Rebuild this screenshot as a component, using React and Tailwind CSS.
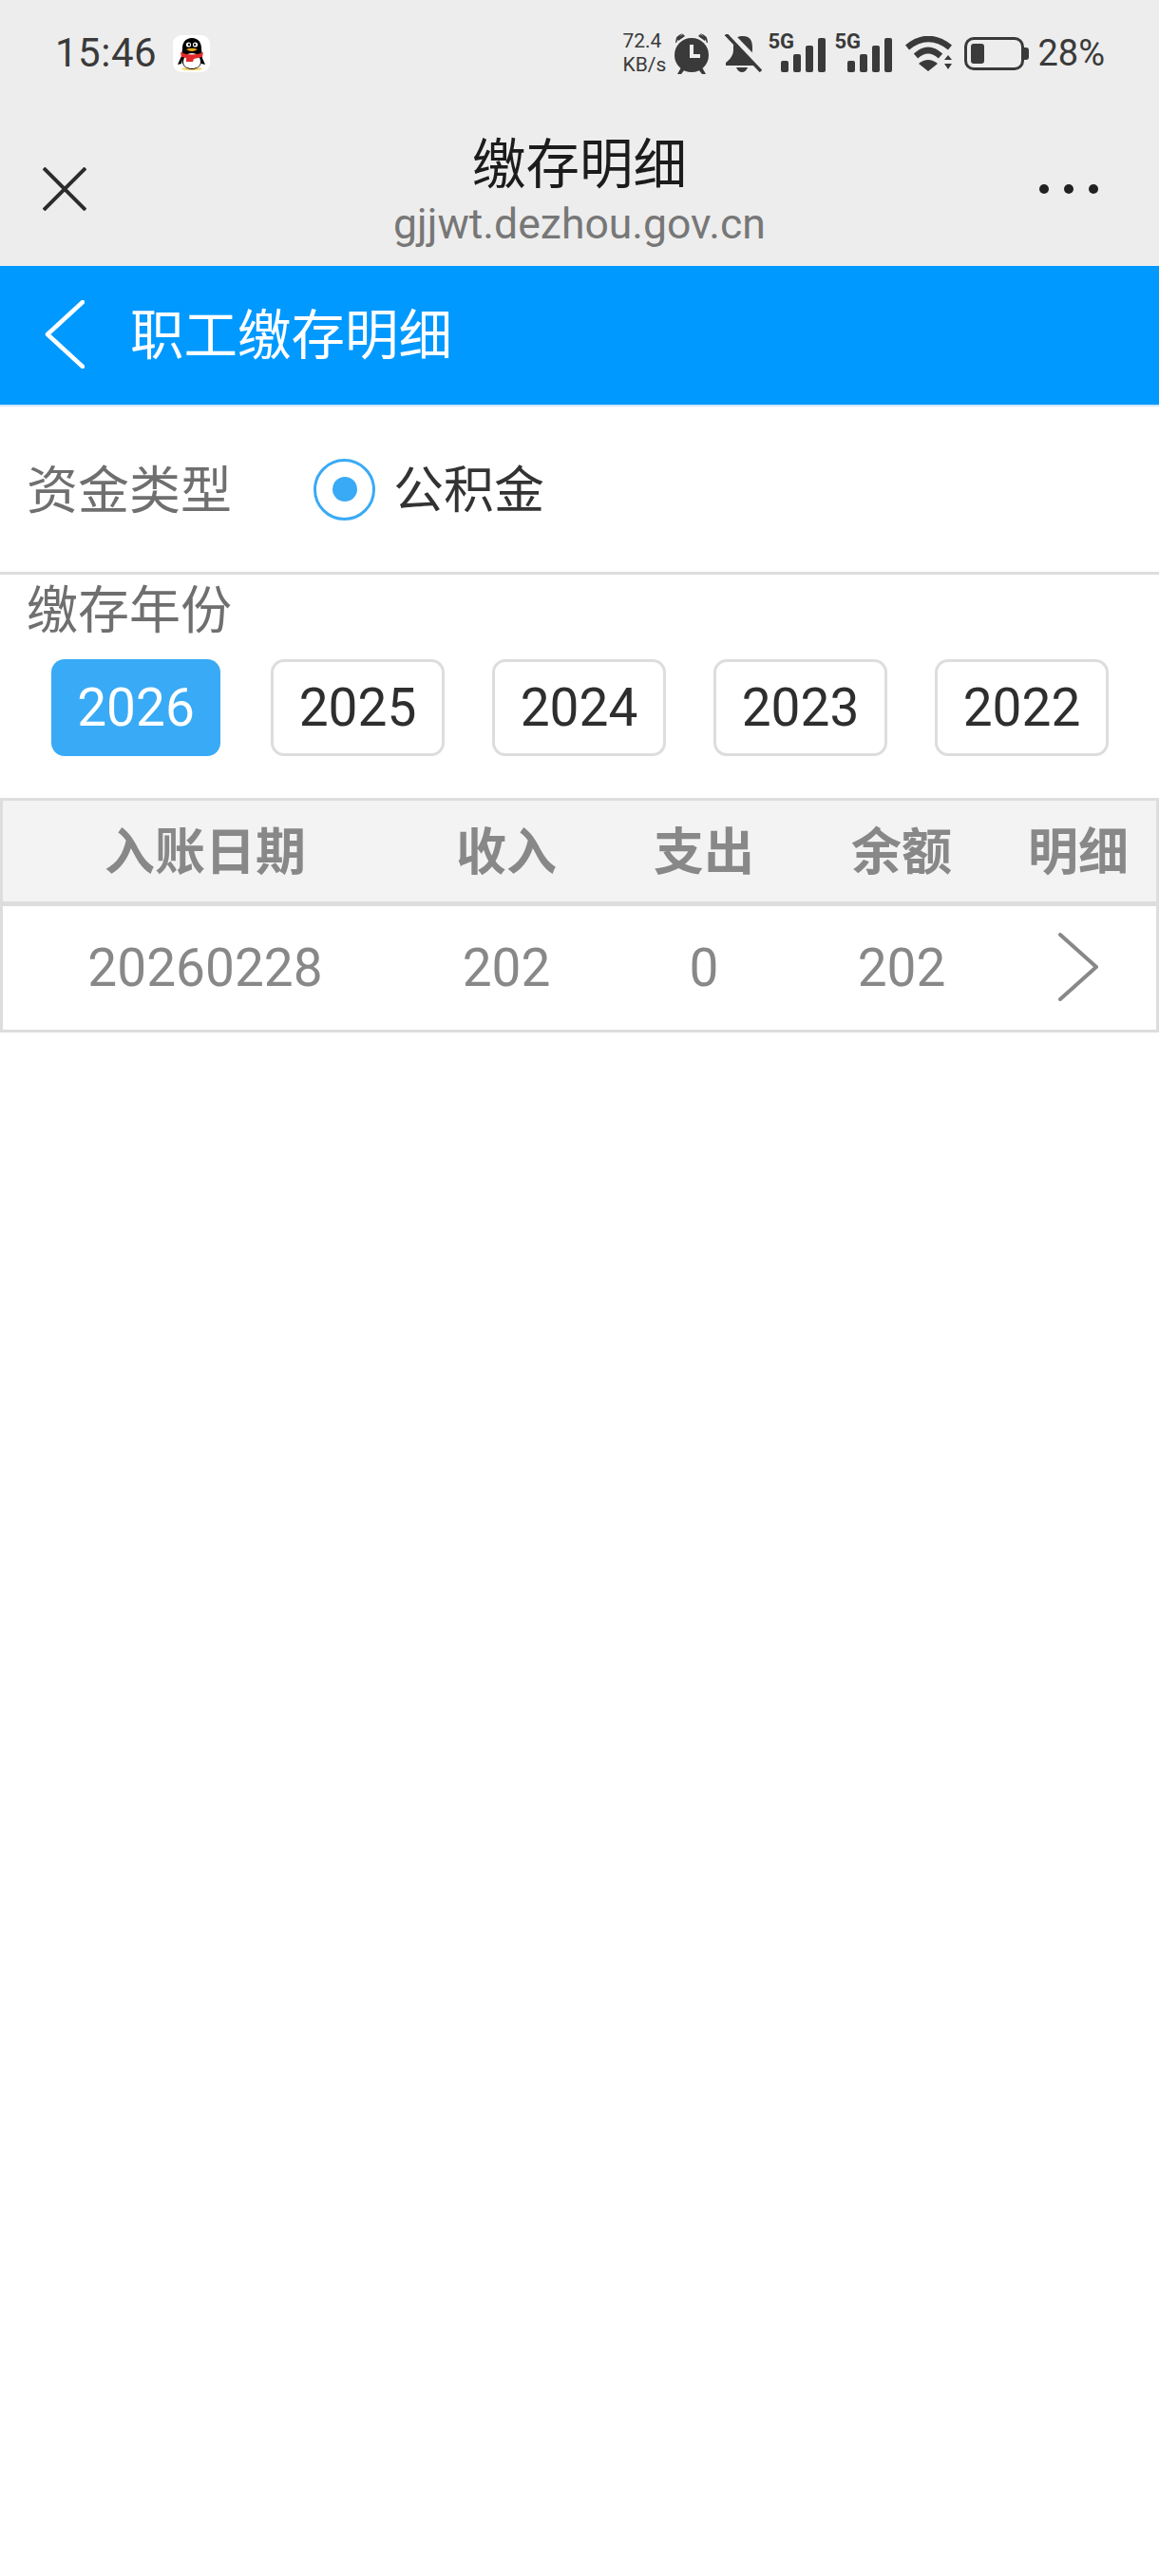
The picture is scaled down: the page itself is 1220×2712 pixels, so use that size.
import React from 'react'

const years = ['2026', '2025', '2024', '2023', '2022']
const cjk = "font-['Roboto','Noto_Sans_CJK_SC',sans-serif]"

const Penguin = () => (
  <svg width="39" height="39" viewBox="0 0 39 39">
    <rect width="39" height="39" rx="9" fill="#fff" />
    <ellipse cx="20" cy="35.5" rx="11" ry="1.6" fill="#f5d66b" />
    <path d="M9 22 L5 31 L9 30 Z M30 22 L34 31 L30 30 Z" fill="#000" />
    <path d="M20 3 C13 3 10 8 10 14 L9 24 C9 31 13 36 20 36 C27 36 31 31 31 24 L30 14 C30 8 27 3 20 3 Z" fill="#000" />
    <path d="M20 19 C14 19 11 24 11 28 C11 33 15 35 20 35 C25 35 29 33 29 28 C29 24 26 19 20 19 Z" fill="#fff" />
    <circle cx="16.5" cy="10" r="2.6" fill="#fff" />
    <circle cx="23.5" cy="10" r="2.6" fill="#fff" />
    <circle cx="17" cy="10" r="1.2" fill="#000" />
    <circle cx="23" cy="10" r="1.2" fill="#000" />
    <path d="M14 15 Q20 12.5 26 15 Q20 19 14 15 Z" fill="#f0a818" />
    <path d="M8 18 Q20 23 32 18 L31 23 L22 25 L21 28 L14 28 L14 24 L9 23 Z" fill="#e02a2a" />
  </svg>
)

const Alarm = () => (
  <svg width="36" height="43" viewBox="0 0 36 43" fill="#3a3a3a">
    <path d="M3 5 L9 1 L11 3 L4 8 Z M33 5 L27 1 L25 3 L32 8 Z" />
    <path d="M1 10 Q1 2 9 0 Q5 3 2 10 Z M35 10 Q35 2 27 0 Q31 3 34 10 Z" />
    <ellipse cx="18" cy="23" rx="18" ry="18" />
    <path d="M7 36 L3 43 L7 43 L11 38 Z M29 36 L33 43 L29 43 L25 38 Z" />
    <path d="M16 12 H20 V22 H27 V26 H16 Z" fill="#ededed" />
  </svg>
)

const BellOff = () => (
  <svg width="39" height="40" viewBox="0 0 39 40">
    <path d="M19 2 C9 2 9 10 9 16 C9 22 6 26 1 30 V33 H32 V30 C28 26 29 20 29 14 C29 6 26 2 19 2 Z" fill="#3a3a3a" />
    <path d="M12 35 H24 Q22 40 18 40 Q14 40 12 35 Z" fill="#3a3a3a" />
    <path d="M4 -2 L41 36" stroke="#ededed" strokeWidth="6" />
    <path d="M1 0 L38 39" stroke="#3a3a3a" strokeWidth="3.5" />
  </svg>
)

const Signal = () => (
  <div className="relative w-[61px] h-[40px]">
    <span className="absolute left-0 top-[-4px] text-[22px] leading-[24px] font-bold text-[#3a3a3a] font-['Roboto',sans-serif]">5G</span>
    <div className="absolute right-0 bottom-0 flex items-end gap-[5px]">
      <div className="w-[8px] h-[12px] rounded-[2px] bg-[#3a3a3a]" />
      <div className="w-[8px] h-[19px] rounded-[2px] bg-[#3a3a3a]" />
      <div className="w-[8px] h-[28px] rounded-[2px] bg-[#3a3a3a]" />
      <div className="w-[8px] h-[36px] rounded-[2px] bg-[#3a3a3a]" />
    </div>
  </div>
)

const Wifi = () => (
  <svg width="50" height="37" viewBox="0 0 50 37" fill="none">
    <path d="M2 12 Q24 -6 47 12" stroke="#3a3a3a" strokeWidth="6.5" />
    <path d="M11 21 Q24 9 37 21" stroke="#3a3a3a" strokeWidth="6.5" />
    <path d="M14 29 Q24 21 34 29 L24 37 Z" fill="#3a3a3a" />
    <path d="M41 25 L45 20 L49 25 Z M41 29 H49 L45 35 Z" fill="#3a3a3a" />
  </svg>
)

const Battery = () => (
  <div className="flex items-center">
    <div className="w-[63px] h-[35px] rounded-[10px] border-[3px] border-[#3a3a3a] p-[4px]">
      <div className="w-[14px] h-full rounded-[3px] bg-[#3a3a3a]" />
    </div>
    <div className="w-[5px] h-[13px] rounded-r-[3px] bg-[#3a3a3a]" />
  </div>
)

const App = () => {
  return (
    <div className={`w-[1220px] min-h-[2712px] bg-white ${cjk}`}>
      {/* Phone chrome */}
      <div className="h-[280px] bg-[#ededed]">
        <div className="h-[110px] flex items-center pl-[58px] pr-[57px] pt-[2px] text-[#3a3a3a]">
          <span className="text-[42px] leading-none tracking-[0.5px] font-['Roboto',sans-serif]">15:46</span>
          <div className="ml-[17px]"><Penguin /></div>
          <div className="ml-auto text-[21px] leading-[25px] w-[41px] text-center font-['Roboto',sans-serif]">
            <div>72.4</div>
            <div>KB/s</div>
          </div>
          <div className="ml-[14px]"><Alarm /></div>
          <div className="ml-[17px]"><BellOff /></div>
          <div className="ml-[6px]"><Signal /></div>
          <div className="ml-[9px]"><Signal /></div>
          <div className="ml-[14px]"><Wifi /></div>
          <div className="ml-[12px]"><Battery /></div>
          <span className="ml-[9px] text-[38px] leading-none font-['Roboto',sans-serif]">28%</span>
        </div>

        <div className="h-[170px] grid grid-cols-[1fr_auto_1fr] items-start px-[45px]">
          <svg className="mt-[66px]" width="46" height="46" viewBox="0 0 46 46" fill="none" stroke="#2c2c2c" strokeWidth="4">
            <path d="M1 1 L45 45 M45 1 L1 45" />
          </svg>
          <div className="flex flex-col items-center pt-[31px]">
            <div className="text-[56.5px] leading-[66px] text-[#1c1c1c]">缴存明细</div>
            <div className="text-[44.5px] leading-[58px] text-[#777777] font-['Roboto',sans-serif]">gjjwt.dezhou.gov.cn</div>
          </div>
          <div className="mt-[84px] mr-[19px] flex justify-end gap-[16px]">
            <div className="w-[10px] h-[10px] rounded-full bg-[#222222]" />
            <div className="w-[10px] h-[10px] rounded-full bg-[#222222]" />
            <div className="w-[10px] h-[10px] rounded-full bg-[#222222]" />
          </div>
        </div>
      </div>

      {/* Blue title bar */}
      <div className="h-[148px] bg-[#0099ff] border-b-[2px] border-[#cfe6f5] flex items-center pl-[47px] pb-[2px]">
        <svg width="42" height="72" viewBox="0 0 42 72" fill="none" stroke="#fff" strokeWidth="4.5" strokeLinecap="round" strokeLinejoin="round">
          <path d="M40 2 L3 36 L40 70" />
        </svg>
        <h1 className="ml-[48px] pt-[5px] text-[56.5px] leading-none text-white">职工缴存明细</h1>
      </div>

      {/* Fund type */}
      <div className="h-[174px] flex items-center pl-[28px] border-b-[3px] border-[#dddddd] box-content">
        <span className="w-[302px] pt-[5px] text-[54px] leading-none text-[#6f6f6f]">资金类型</span>
        <div className="w-[65px] h-[65px] rounded-full border-[3px] border-[#39aaf5] flex items-center justify-center">
          <div className="w-[26px] h-[26px] rounded-full bg-[#39aaf5]" />
        </div>
        <span className="ml-[19px] pt-[5px] text-[53px] leading-none text-[#333333]">公积金</span>
      </div>

      {/* Year */}
      <div className="pl-[28px] pt-[12px] h-[89px] text-[54px] leading-[54px] text-[#6f6f6f]">缴存年份</div>
      <div className="flex pl-[54px] gap-[50px]">
        {years.map((y, i) => (
          <button
            key={y}
            className={
              i === 0
                ? 'w-[178px] mr-[3px] h-[102px] rounded-[14px] bg-[#39aaf5] text-white text-[55px] leading-none'
                : 'w-[183px] h-[102px] rounded-[14px] border-[3px] border-[#dddddd] bg-white text-[#2e2e2e] text-[55px] leading-none'
            }
          >
            {y}
          </button>
        ))}
      </div>

      {/* Table */}
      <div className="mt-[44px] border-[3px] border-[#dddddd] text-[#888888]">
        <div className="h-[106px] bg-[#f3f3f3] border-b-[5px] border-[#dddddd] box-content grid grid-cols-[426px_208px_208px_208px_164px] items-center text-center text-[53px] leading-none font-bold">
          <div className="pt-[4px]">入账日期</div>
          <div className="pt-[4px]">收入</div>
          <div className="pt-[4px]">支出</div>
          <div className="pt-[4px]">余额</div>
          <div className="pt-[4px]">明细</div>
        </div>
        <div className="h-[130px] grid grid-cols-[426px_208px_208px_208px_164px] items-center text-center text-[55px] leading-none">
          <div>20260228</div>
          <div>202</div>
          <div>0</div>
          <div>202</div>
          <div className="flex justify-center pb-[3px]">
            <svg width="42" height="72" viewBox="0 0 42 72" fill="none" stroke="#888888" strokeWidth="4" strokeLinecap="round" strokeLinejoin="round">
              <path d="M2 2 L40 36 L2 70" />
            </svg>
          </div>
        </div>
      </div>
    </div>
  )
}

export default App
